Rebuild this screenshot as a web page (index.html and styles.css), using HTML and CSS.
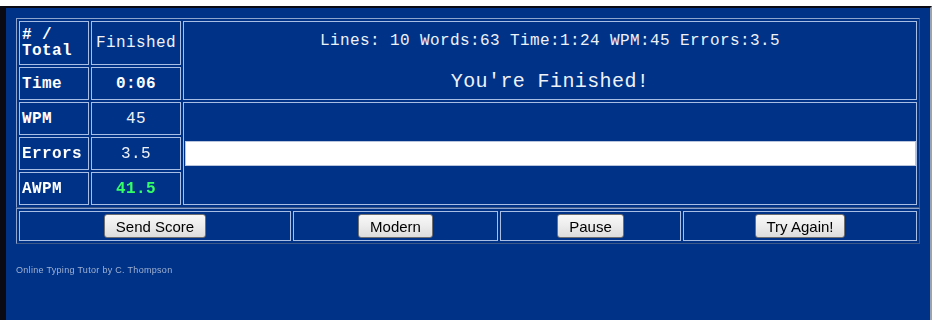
FILE: index.html
```html
<!DOCTYPE html>
<html lang="en">
<head>
    <meta charset="UTF-8">
    <title>Online Typing Tutor</title>
    <link rel="stylesheet" href="styles.css">
</head>
<body>
    <div class="frame">
        <table class="board">
            <tr class="row-top">
                <td class="label">#&nbsp;/ Total</td>
                <td class="value plain">Finished</td>
                <td class="status" rowspan="2">
                    <div class="stats">Lines: 10 Words:63 Time:1:24 WPM:45 Errors:3.5</div>
                    <div class="message">You're Finished!</div>
                </td>
            </tr>
            <tr>
                <td class="label">Time</td>
                <td class="value strong">0:06</td>
            </tr>
            <tr>
                <td class="label">WPM</td>
                <td class="value plain">45</td>
                <td class="typing" rowspan="3">
                    <input type="text" class="entry" autofocus>
                </td>
            </tr>
            <tr>
                <td class="label">Errors</td>
                <td class="value plain">3.5</td>
            </tr>
            <tr>
                <td class="label">AWPM</td>
                <td class="value strong green">41.5</td>
            </tr>
        </table>

        <table class="controls">
            <tr>
                <td class="c1"><button type="button">Send Score</button></td>
                <td class="c2"><button type="button">Modern</button></td>
                <td class="c3"><button type="button">Pause</button></td>
                <td class="c4"><button type="button">Try Again!</button></td>
            </tr>
        </table>

        <p class="credit">Online Typing Tutor by C. Thompson</p>
    </div>
</body>
</html>
```

FILE: styles.css
```css
html, body {
    margin: 0;
    padding: 0;
    background-color: #ffffff;
}
.frame {
    margin-top: 6px;
    width: 932px;
    height: 314px;
    box-sizing: border-box;
    padding: 10px 0 0 10px;
    background-color: #003388;
    border-top: 2px solid #0a0a14;
    border-left: 6px solid #0a0a14;
    border-right: 2px solid #9aa3b0;
}
table {
    border-collapse: separate;
    border-spacing: 2px;
    border: 1px solid;
    border-color: #8ea4cc #3d5988 #3d5988 #8ea4cc;
    width: 904px;
}
td {
    border: 1px solid #a9bee4;
    padding: 0;
    color: #ffffff;
    font-family: "Liberation Mono", "Courier New", monospace;
    font-size: 16px;
    letter-spacing: 0.4px;
}
.board .row-top td {
    height: 42px;
}
.board td {
    height: 31px;
}
.label {
    width: 66px;
    font-weight: bold;
    padding-left: 2px;
    line-height: 16px;
}
.value {
    width: 88px;
    text-align: center;
}
.plain {
    color: #eef2f8;
}
.strong {
    font-weight: bold;
}
.green {
    color: #33ff66;
}
.status {
    text-align: center;
    vertical-align: top;
}
.stats {
    margin-top: 10px;
    color: #eef2f8;
}
.message {
    margin-top: 20px;
    font-size: 20px;
    color: #eef2f8;
}
.typing {
    padding-left: 1px;
}
.entry {
    display: block;
    box-sizing: border-box;
    width: 100%;
    height: 25px;
    margin: 0;
    border: 1px solid #b8c4dc;
    background-color: #ffffff;
    font-family: "Liberation Mono", "Courier New", monospace;
    font-size: 16px;
    padding: 0 3px;
    outline: none;
}
.controls {
    margin-top: 0;
}
.controls td {
    height: 28px;
    text-align: center;
}
.c1 { width: 270px; }
.c2 { width: 203px; }
.c3 { width: 179px; }
.c4 { width: 232px; }
button {
    height: 24px;
    padding: 0 11px;
    font-family: "Liberation Sans", Arial, sans-serif;
    font-size: 15px;
    color: #000000;
    background: linear-gradient(#f8f8f8, #ececec 50%, #dcdcdc);
    border: 1px solid #707070;
    border-radius: 3px;
    cursor: pointer;
}
.credit {
    margin: 21px 0 0 0;
    font-family: "Liberation Sans", Arial, sans-serif;
    font-size: 9px;
    letter-spacing: 0.3px;
    color: #9fb0d0;
}
```
